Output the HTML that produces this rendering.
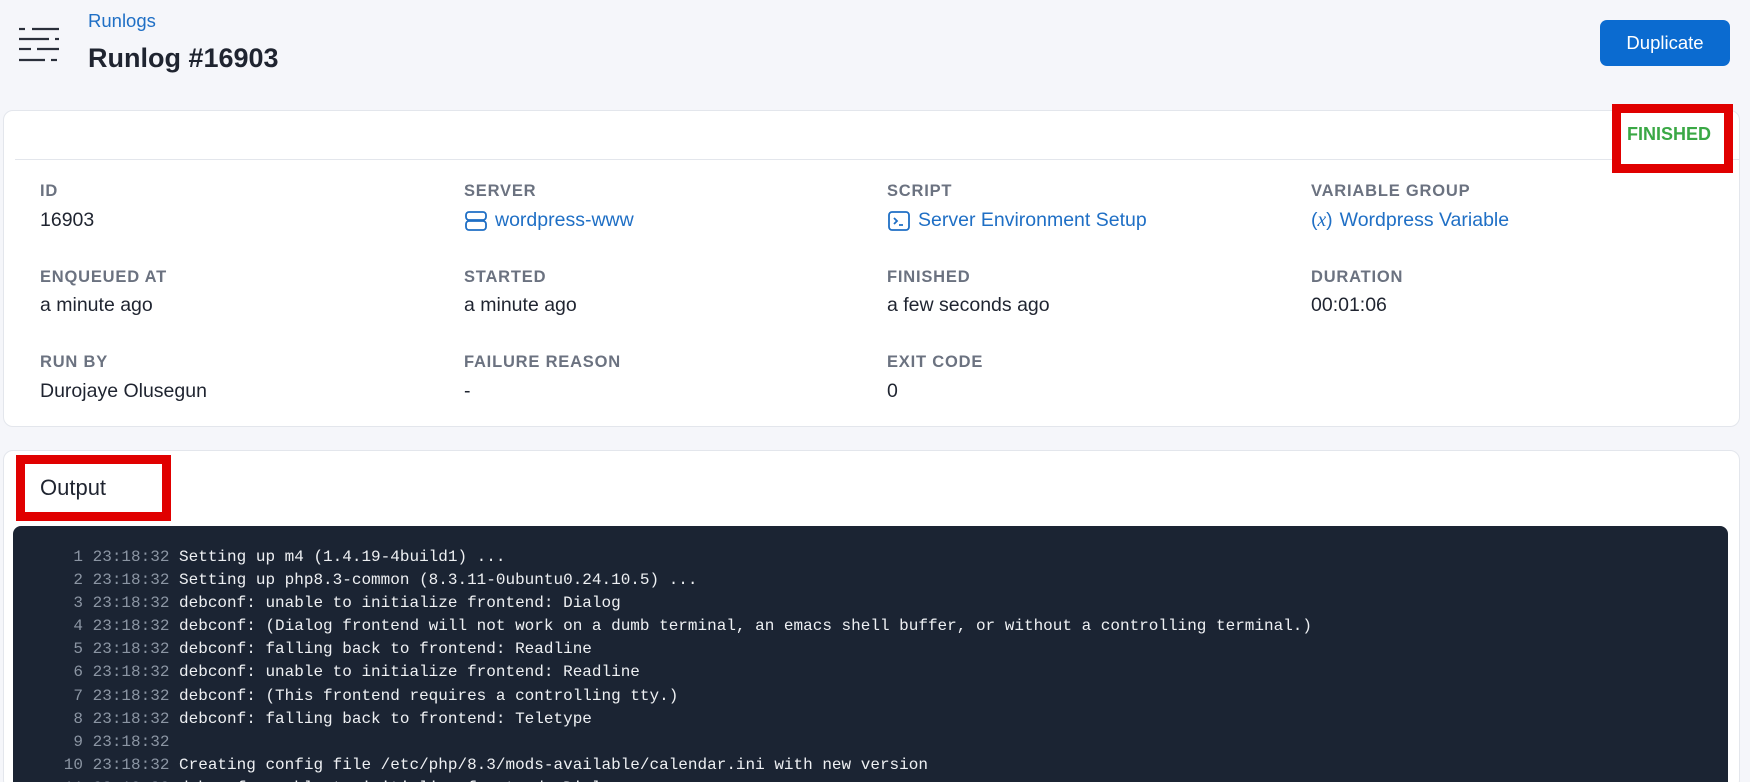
<!DOCTYPE html>
<html><head><meta charset="utf-8"><style>
*{margin:0;padding:0;box-sizing:border-box}
html,body{overflow:hidden}
body{width:1750px;height:782px;background:#f5f6fa;font-family:"Liberation Sans",sans-serif;position:relative;color:#1f2430}
.abs{position:absolute}
.lbl{position:absolute;font-size:16.5px;color:#6b7280;font-weight:600;letter-spacing:.8px}
.val{position:absolute;font-size:19.5px;color:#1f2430}
.lnk{color:#1f6fc5;display:flex;align-items:center;gap:7px}
.card{position:absolute;left:3px;width:1737px;background:#fff;border:1px solid #e3e6ec;border-radius:10px}
.term{position:absolute;left:13px;top:526px;width:1715px;height:256px;background:#1b2433;border-radius:8px 8px 0 0;font-family:"Liberation Mono",monospace;font-size:16px;color:#eef0f3;padding-top:20px}
.ln{height:23.1px;line-height:23.1px;white-space:pre}
.n{display:inline-block;width:70px;text-align:right;color:#8b95a3}
.t{color:#8b95a3}
</style></head><body>
<svg class="abs" style="left:19px;top:27px" width="40" height="36" viewBox="0 0 40 36" stroke="#2a2f3a" stroke-width="2.2">
<line x1="0" y1="2" x2="6" y2="2"/><line x1="13" y1="2" x2="40" y2="2"/>
<line x1="0" y1="12" x2="30" y2="12"/><line x1="36" y1="12" x2="40" y2="12"/>
<line x1="0" y1="22" x2="12" y2="22"/><line x1="18" y1="22" x2="40" y2="22"/>
<line x1="0" y1="33" x2="26" y2="33"/><line x1="32" y1="33" x2="38" y2="33"/>
</svg>
<div class="abs" style="left:88px;top:10px;font-size:18.5px;color:#1f6fc5">Runlogs</div>
<div class="abs" style="left:88px;top:43px;font-size:27px;font-weight:700;color:#1f2430">Runlog #16903</div>
<div class="abs" style="left:1600px;top:20px;width:130px;height:46px;background:#0b6bd0;border-radius:7px;color:#fff;font-size:18.5px;display:flex;align-items:center;justify-content:center">Duplicate</div>

<div class="card" style="top:110px;height:317px"></div>
<div class="abs" style="left:15px;top:159px;width:1725px;height:1px;background:#e3e6ec"></div>
<div class="abs" style="left:1612px;top:104px;width:121px;height:69px;border:9px solid #e00000;background:#fff"></div>
<div class="abs" style="left:1627px;top:124px;font-size:18px;font-weight:700;color:#3aa845">FINISHED</div>

<div class="lbl" style="left:40px;top:182px">ID</div><div class="val" style="left:40px;top:209px">16903</div>
<div class="lbl" style="left:464px;top:182px">SERVER</div>
<div class="val lnk" style="left:464px;top:209px"><svg width="24" height="22" viewBox="0 0 24 22" fill="none" stroke="#1f6fc5" stroke-width="1.8"><rect x="2" y="2" width="20" height="8" rx="3"/><rect x="2" y="11" width="20" height="9" rx="3"/></svg>wordpress-www</div>
<div class="lbl" style="left:887px;top:182px">SCRIPT</div>
<div class="val lnk" style="left:887px;top:209px"><svg width="24" height="22" viewBox="0 0 24 22" fill="none" stroke="#1f6fc5" stroke-width="1.8"><rect x="2" y="2" width="20" height="18" rx="3"/><path d="M7 8l3 3-3 3M12 15h4"/></svg>Server Environment Setup</div>
<div class="lbl" style="left:1311px;top:182px">VARIABLE GROUP</div>
<div class="val lnk" style="left:1311px;top:209px"><span>(<i style="font-family:'Liberation Serif',serif">x</i>)</span>Wordpress Variable</div>

<div class="lbl" style="left:40px;top:268px">ENQUEUED AT</div><div class="val" style="left:40px;top:294px">a minute ago</div>
<div class="lbl" style="left:464px;top:268px">STARTED</div><div class="val" style="left:464px;top:294px">a minute ago</div>
<div class="lbl" style="left:887px;top:268px">FINISHED</div><div class="val" style="left:887px;top:294px">a few seconds ago</div>
<div class="lbl" style="left:1311px;top:268px">DURATION</div><div class="val" style="left:1311px;top:294px">00:01:06</div>

<div class="lbl" style="left:40px;top:353px">RUN BY</div><div class="val" style="left:40px;top:380px">Durojaye Olusegun</div>
<div class="lbl" style="left:464px;top:353px">FAILURE REASON</div><div class="val" style="left:464px;top:380px">-</div>
<div class="lbl" style="left:887px;top:353px">EXIT CODE</div><div class="val" style="left:887px;top:380px">0</div>

<div class="card" style="top:450px;height:340px"></div>
<div class="abs" style="left:16px;top:455px;width:155px;height:66px;border:9px solid #e00000;background:#fff"></div>
<div class="abs" style="left:40px;top:475px;font-size:22px;color:#1f2430">Output</div>
<div class="term">
<div class="ln"><span class="n">1</span> <span class="t">23:18:32</span> Setting up m4 (1.4.19-4build1) ...</div>
<div class="ln"><span class="n">2</span> <span class="t">23:18:32</span> Setting up php8.3-common (8.3.11-0ubuntu0.24.10.5) ...</div>
<div class="ln"><span class="n">3</span> <span class="t">23:18:32</span> debconf: unable to initialize frontend: Dialog</div>
<div class="ln"><span class="n">4</span> <span class="t">23:18:32</span> debconf: (Dialog frontend will not work on a dumb terminal, an emacs shell buffer, or without a controlling terminal.)</div>
<div class="ln"><span class="n">5</span> <span class="t">23:18:32</span> debconf: falling back to frontend: Readline</div>
<div class="ln"><span class="n">6</span> <span class="t">23:18:32</span> debconf: unable to initialize frontend: Readline</div>
<div class="ln"><span class="n">7</span> <span class="t">23:18:32</span> debconf: (This frontend requires a controlling tty.)</div>
<div class="ln"><span class="n">8</span> <span class="t">23:18:32</span> debconf: falling back to frontend: Teletype</div>
<div class="ln"><span class="n">9</span> <span class="t">23:18:32</span></div>
<div class="ln"><span class="n">10</span> <span class="t">23:18:32</span> Creating config file /etc/php/8.3/mods-available/calendar.ini with new version</div>
<div class="ln"><span class="n">11</span> <span class="t">23:18:32</span> debconf: unable to initialize frontend: Dialog</div>
</div>
</body></html>
